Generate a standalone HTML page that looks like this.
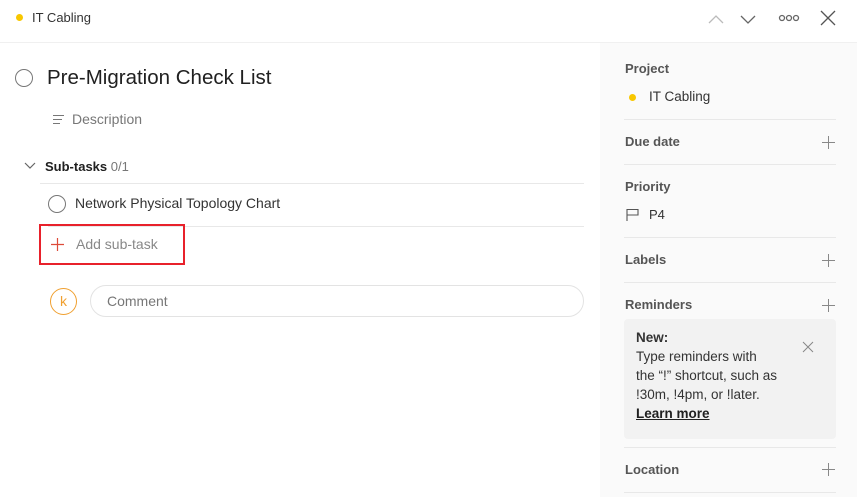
<!DOCTYPE html>
<html><head><meta charset="utf-8"><style>
*{margin:0;padding:0;box-sizing:border-box}
body{width:857px;height:497px;background:#fff;font-family:"Liberation Sans",sans-serif;position:relative;overflow:hidden;color:#202020}
.a{position:absolute;white-space:nowrap}
.side{position:absolute;left:600px;top:43px;width:257px;height:454px;background:#fafafa}
.hd{font-size:13px;font-weight:bold;color:#555}
.hr{position:absolute;height:1px;background:#e8e8e8}
.plus{position:absolute;width:13px;height:13px}
.plus:before{content:"";position:absolute;left:6px;top:0;width:1px;height:13px;background:#888}
.plus:after{content:"";position:absolute;top:6px;left:0;height:1px;width:13px;background:#888}
</style></head><body>
<div class="hr" style="left:0;top:42px;width:857px;background:#f0f0f0"></div>
<div class="a" style="left:16px;top:14px;width:7px;height:7px;border-radius:50%;background:#f8c700"></div>
<div class="a" style="left:32px;top:10px;font-size:13px;color:#333">IT Cabling</div>
<svg class="a" style="left:700px;top:8px" width="140" height="20" fill="none" stroke-width="1.3">
<path d="M9 15 L16 8 L23 15" stroke="#bbb"/>
<path d="M41 8 L48 15 L55 8" stroke="#666"/>
<circle cx="82" cy="10" r="2.5" stroke="#666"/><circle cx="89" cy="10" r="2.5" stroke="#666"/><circle cx="96" cy="10" r="2.5" stroke="#666"/>
<path d="M121 3 L135 17 M135 3 L121 17" stroke="#555"/>
</svg>
<div class="a" style="left:15px;top:69px;width:18px;height:18px;border:1.3px solid #777;border-radius:50%"></div>
<div class="a" style="left:47px;top:66px;font-size:20.5px;font-weight:500;color:#202020">Pre-Migration Check List</div>
<svg class="a" style="left:53px;top:113px" width="12" height="12" stroke="#777" stroke-width="1"><path d="M0 2.5H11M0 6.5H9M0 10.5H7"/></svg>
<div class="a" style="left:72px;top:111px;font-size:14px;color:#777">Description</div>
<svg class="a" style="left:24px;top:162px" width="12" height="8" fill="none" stroke="#666" stroke-width="1.2"><path d="M1 1L6 6L11 1"/></svg>
<div class="a" style="left:45px;top:159px;font-size:13px;font-weight:bold;color:#202020">Sub-tasks <span style="font-weight:normal;color:#777">0/1</span></div>
<div class="hr" style="left:40px;top:183px;width:544px"></div>
<div class="a" style="left:48px;top:195px;width:18px;height:18px;border:1.3px solid #777;border-radius:50%"></div>
<div class="a" style="left:75px;top:195px;font-size:14px;color:#333">Network Physical Topology Chart</div>
<div class="hr" style="left:48px;top:226px;width:536px"></div>
<div class="a" style="left:39px;top:224px;width:146px;height:41px;border:2px solid #e8212b"></div>
<svg class="a" style="left:51px;top:238px" width="13" height="13" stroke="#dd4b39" stroke-width="1.2"><path d="M6.5 0V13M0 6.5H13"/></svg>
<div class="a" style="left:76px;top:236px;font-size:14px;color:#888">Add sub-task</div>
<div class="a" style="left:50px;top:288px;width:27px;height:27px;border:1.3px solid #f0a030;border-radius:50%;color:#f0a030;font-size:14px;text-align:center;line-height:24px">k</div>
<div class="a" style="left:90px;top:285px;width:494px;height:32px;border:1px solid #e3e3e3;border-radius:16px"></div>
<div class="a" style="left:107px;top:293px;font-size:14px;color:#777">Comment</div>

<div class="side">
<div class="a hd" style="left:25px;top:18px">Project</div>
<div class="a" style="left:29px;top:51px;width:7px;height:7px;border-radius:50%;background:#f8c700"></div>
<div class="a" style="left:49px;top:46px;font-size:13.5px;color:#333">IT Cabling</div>
<div class="hr" style="left:24px;top:76px;width:212px"></div>
<div class="a hd" style="left:25px;top:91px">Due date</div>
<div class="plus" style="left:222px;top:93px"></div>
<div class="hr" style="left:24px;top:121px;width:212px"></div>
<div class="a hd" style="left:25px;top:136px">Priority</div>
<svg class="a" style="left:26px;top:165px" width="14" height="14" fill="none" stroke="#555" stroke-width="1.1"><path d="M1 13V1.5H12V7H1"/></svg>
<div class="a" style="left:49px;top:164px;font-size:13px;color:#333">P4</div>
<div class="hr" style="left:24px;top:194px;width:212px"></div>
<div class="a hd" style="left:25px;top:209px">Labels</div>
<div class="plus" style="left:222px;top:211px"></div>
<div class="hr" style="left:24px;top:239px;width:212px"></div>
<div class="a hd" style="left:25px;top:254px">Reminders</div>
<div class="plus" style="left:222px;top:256px"></div>
<div class="a" style="left:24px;top:276px;width:212px;height:120px;background:#f2f2f2;border-radius:4px"></div>
<div class="a" style="left:36px;top:285px;font-size:13.5px;line-height:19px;color:#333"><b>New:</b><br>Type reminders with<br>the “!” shortcut, such as<br>!30m, !4pm, or !later.<br><b style="text-decoration:underline;color:#202020">Learn more</b></div>
<svg class="a" style="left:202px;top:298px" width="12" height="12" stroke="#888" stroke-width="1"><path d="M1 1L11 11M11 1L1 11"/></svg>
<div class="hr" style="left:24px;top:404px;width:212px"></div>
<div class="a hd" style="left:25px;top:419px">Location</div>
<div class="plus" style="left:222px;top:420px"></div>
<div class="hr" style="left:24px;top:449px;width:212px"></div>
</div>
</body></html>
